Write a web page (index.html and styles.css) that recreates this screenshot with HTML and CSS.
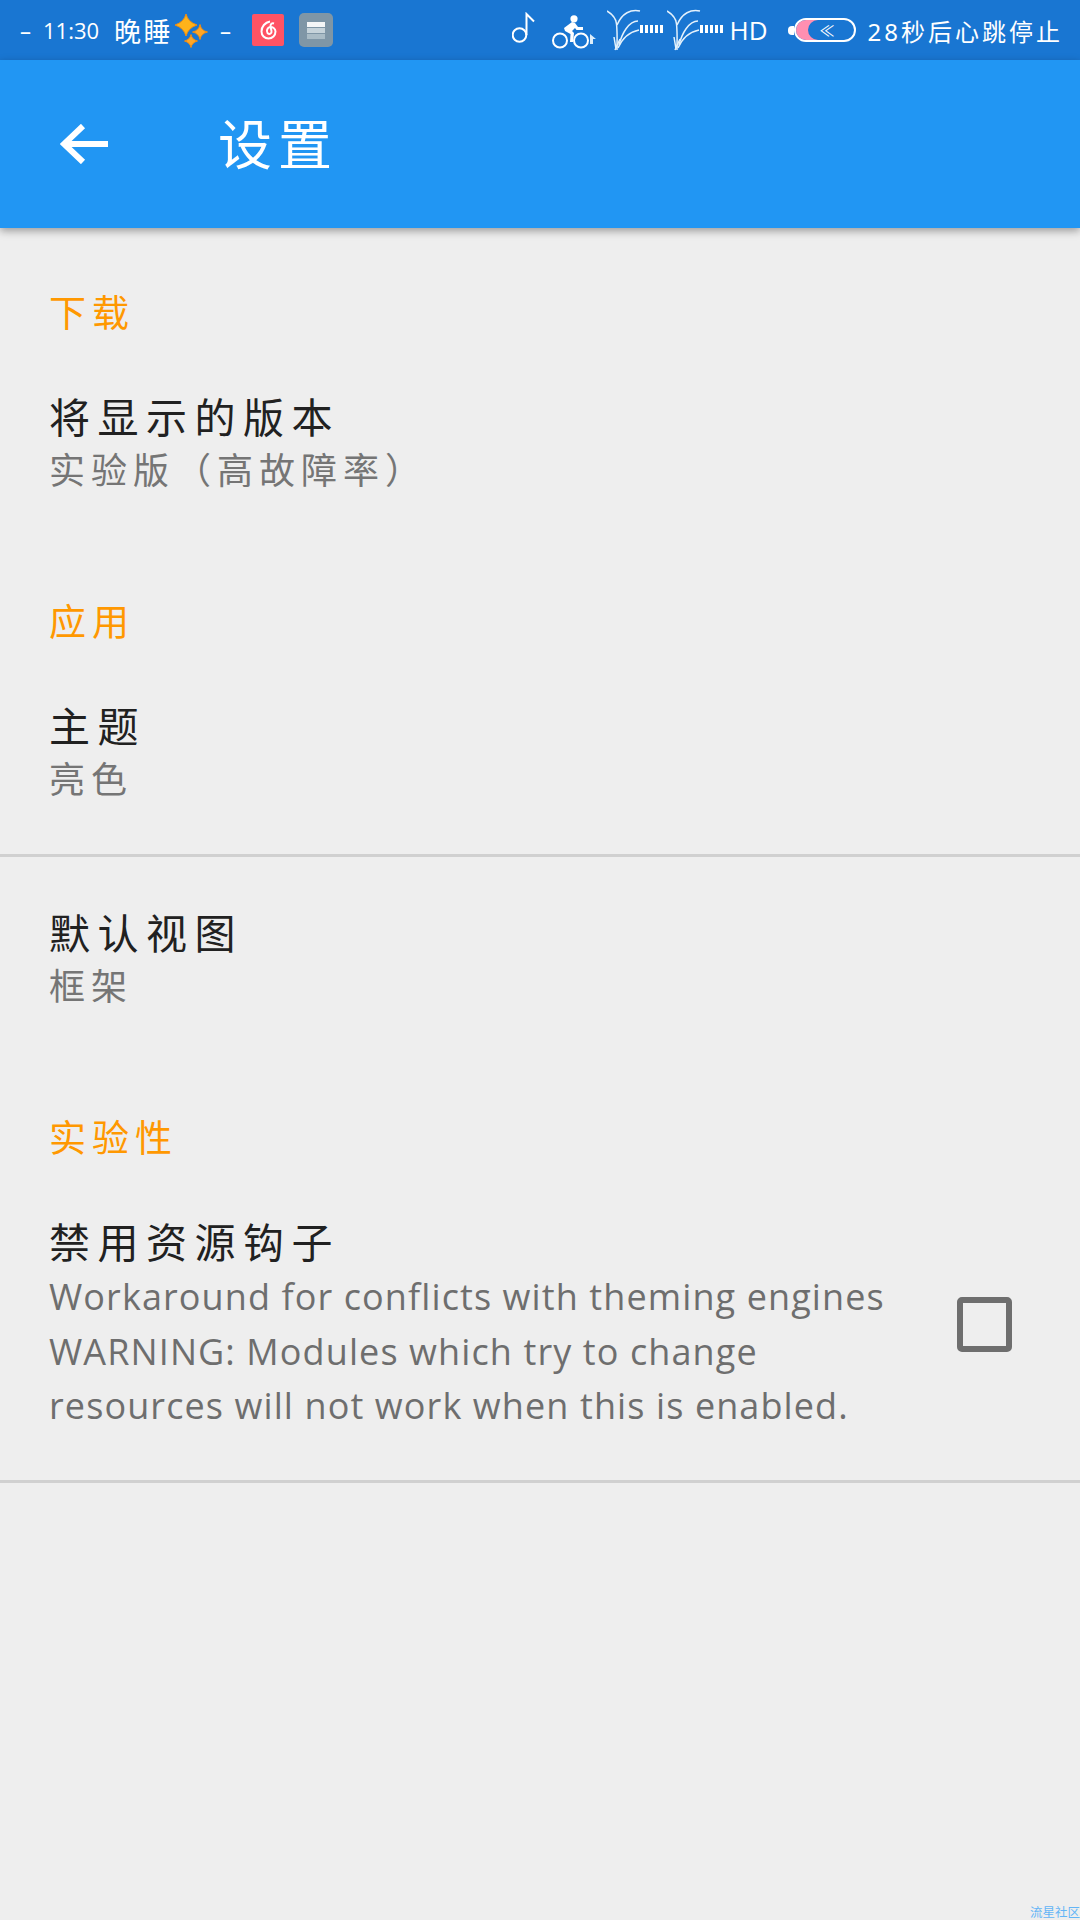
FILE: index.html
```html
<!DOCTYPE html>
<html lang="zh-CN">

<head>
    <meta charset="UTF-8">
    <meta name="viewport" content="width=device-width, initial-scale=1.0">
    <title>设置</title>
    <link rel="stylesheet" href="styles.css">
</head>

<body>
    <div class="status-bar">
        <div class="status-left">
            <span class="status-dash">–</span>
            <span class="status-time">11:30</span>
            <span class="status-note">晚睡</span>
            <svg class="sparkle" width="33" height="35" viewBox="0 0 33 35">
                <path d="M11 1 Q13 9 22 12 Q13 15 11 23 Q9 15 0 12 Q9 9 11 1 Z" fill="#ffb31a" stroke="#f08c10"/>
                <path d="M25 11.5 Q26 17.5 32.5 19 Q26 20.5 25 26.5 Q24 20.5 17.5 19 Q24 17.5 25 11.5 Z" fill="#ffa726" stroke="#f08c10"/>
                <path d="M16 21.5 Q17 26.5 22.5 28 Q17 29.5 16 34.5 Q15 29.5 9.5 28 Q15 26.5 16 21.5 Z" fill="#ffa726" stroke="#f08c10"/>
            </svg>
            <span class="status-dash status-dash-end">–</span>
            <div class="app-icon app-icon-red">
                <svg width="17" height="20" viewBox="0 0 17 20" fill="none" stroke="#fff" stroke-width="2">
                    <path d="M10 1.5 C5 2.5 1.5 6.5 1.5 11.5 A7 7 0 0 0 15.5 11.5 C15.5 8.5 12.5 6.5 10 7 C7.5 7.5 6 11 7.5 13 C9.5 15 12 13.5 11.5 11 L10.5 6.5 C10.3 4 12 2.8 14 3.5"/>
                </svg>
            </div>
            <div class="app-icon app-icon-grey">
                <span class="stack-line stack-top"></span>
                <span class="stack-line"></span>
                <span class="stack-line stack-low"></span>
            </div>
        </div>
        <div class="status-right">
            <svg class="icon-note" width="23" height="32" viewBox="0 0 23 32" fill="none" stroke="#fff" stroke-width="2">
                <circle cx="7.5" cy="23" r="6.8"/>
                <path d="M14.5 23 V2 L22 9.5"/>
            </svg>
            <svg class="icon-bike" width="45" height="34" viewBox="0 0 45 34">
                <circle cx="22" cy="3.8" r="3.6" fill="#fff"/>
                <path d="M12 13 L20 7 L23 8 L26 12 L31 12 L31 15 L24.5 15 L23 13 L20 16 L22 18 L21 27 L18 27 L18.5 19 L13 16 Z" fill="#fff"/>
                <g fill="none" stroke="#fff" stroke-width="2">
                    <circle cx="8" cy="25.5" r="7"/>
                    <circle cx="29" cy="25.5" r="7"/>
                </g>
                <path d="M38 19 L44 24 L41 24 L41 29 L38 29 Z" fill="#dceefb"/>
            </svg>
            <svg class="icon-signal" width="57" height="42" viewBox="0 0 57 42" fill="none" stroke="#e3f1fc" stroke-width="1.5">
                <path d="M0 2 C5 5 9 9 9.5 15 C10.5 24 10 32 10 41"/>
                <path d="M33 2 C24 0 15 4 10 16"/>
                <path d="M31 12 C22 12 15 24 12 36"/>
                <path d="M32 21 C22 23 15 30 11 39"/>
                <path d="M7 28 L9 40 M13 30 L8 41"/>
                <path d="M34.5 16 V24 M39.5 16 V24 M44.5 16 V24 M49.5 16 V24 M54.5 16 V24" stroke="#fff" stroke-width="3"/>
            </svg>
            <svg class="icon-signal icon-signal-2" width="57" height="42" viewBox="0 0 57 42" fill="none" stroke="#e3f1fc" stroke-width="1.5">
                <path d="M0 2 C5 5 9 9 9.5 15 C10.5 24 10 32 10 41"/>
                <path d="M33 2 C24 0 15 4 10 16"/>
                <path d="M31 12 C22 12 15 24 12 36"/>
                <path d="M32 21 C22 23 15 30 11 39"/>
                <path d="M7 28 L9 40 M13 30 L8 41"/>
                <path d="M34.5 16 V24 M39.5 16 V24 M44.5 16 V24 M49.5 16 V24 M54.5 16 V24" stroke="#fff" stroke-width="3"/>
            </svg>
            <span class="status-hd">HD</span>
            <div class="battery">
                <span class="battery-nub"></span>
                <div class="battery-body">
                    <span class="battery-fill"></span>
                    <span class="battery-mark">≪</span>
                </div>
            </div>
            <span class="status-msg">28秒后心跳停止</span>
        </div>
    </div>

    <header class="toolbar">
        <svg class="back-icon" width="48" height="40" viewBox="0 0 48 40" fill="none" stroke="#fff" stroke-width="6">
            <path d="M48 20 H4"/>
            <path d="M23 2 L4 20 L23 38"/>
        </svg>
        <h1 class="toolbar-title">设置</h1>
    </header>

    <main class="prefs">
        <section class="pref-group">
            <h2 class="pref-category">下载</h2>
            <div class="pref">
                <div class="pref-title">将显示的版本</div>
                <div class="pref-summary">实验版（高故障率）</div>
            </div>
        </section>

        <section class="pref-group">
            <h2 class="pref-category">应用</h2>
            <div class="pref pref-divided">
                <div class="pref-title">主题</div>
                <div class="pref-summary">亮色</div>
            </div>
            <div class="pref">
                <div class="pref-title">默认视图</div>
                <div class="pref-summary">框架</div>
            </div>
        </section>

        <section class="pref-group">
            <h2 class="pref-category">实验性</h2>
            <div class="pref pref-check pref-divided">
                <div class="pref-text">
                    <div class="pref-title">禁用资源钩子</div>
                    <div class="pref-summary pref-summary-long">Workaround for conflicts with theming engines<br>WARNING: Modules which try to change<br>resources will not work when this is enabled.</div>
                </div>
                <span class="checkbox"></span>
            </div>
        </section>
    </main>

    <div class="watermark">流星社区</div>
</body>

</html>
```

FILE: styles.css
```css
* {
    box-sizing: border-box;
}

body {
    margin: 0;
    height: 1920px;
    overflow: hidden;
    position: relative;
    background-color: #eeeeee;
    font-family: "Noto Sans", "Noto Sans CJK SC", sans-serif;
}

/* status bar */
.status-bar {
    height: 60px;
    background-color: #1976d2;
    color: #fff;
    display: flex;
    justify-content: space-between;
    align-items: center;
    padding: 0 17px 0 20px;
    font-size: 24px;
}

.status-left,
.status-right {
    display: flex;
    align-items: center;
}

.status-dash {
    width: 13px;
    font-size: 22px;
}

.status-time {
    margin-left: 10px;
    font-size: 22px;
    font-family: "Open Sans", sans-serif;
}

.status-note {
    margin-left: 15px;
    font-size: 27px;
    letter-spacing: 2.5px;
}

.sparkle {
    margin-left: 2px;
}

.status-dash-end {
    margin-left: 12px;
}

.app-icon {
    display: flex;
    align-items: center;
    justify-content: center;
}

.app-icon-red {
    width: 32px;
    height: 32px;
    margin-left: 19px;
    border-radius: 2px;
    background-color: #ff5364;
}

.app-icon-grey {
    width: 34px;
    height: 34px;
    margin-left: 15px;
    border-radius: 5px;
    background-color: #7f96a6;
    flex-direction: column;
    gap: 1px;
}

.stack-line {
    width: 18px;
    height: 5px;
    background-color: #c6d3da;
}

.stack-top {
    background-color: #f4f6f7;
}

.stack-low {
    background-color: #aabcc6;
}

.icon-note {
    margin: -4px 17px 0 0;
}

.icon-bike {
    margin: 3px 10px 0 0;
}

.icon-signal-2 {
    margin-left: 3px;
}

.status-hd {
    margin-left: 5px;
    font-size: 26px;
    font-family: "Open Sans", sans-serif;
}

.battery {
    display: flex;
    align-items: center;
    margin-left: 20px;
}

.battery-nub {
    width: 6px;
    height: 9px;
    border-radius: 4px 0 0 4px;
    background-color: #fff;
}

.battery-body {
    width: 62px;
    height: 24px;
    border: 2px solid #fff;
    border-radius: 12px;
    overflow: hidden;
    display: flex;
    align-items: center;
    position: relative;
}

.battery-fill {
    width: 22px;
    height: 100%;
    background-color: #ff8fb1;
    position: relative;
}

/* bite taken out of the charge level */
.battery-fill::after {
    content: "";
    position: absolute;
    left: 12px;
    top: 0;
    width: 20px;
    height: 20px;
    border-radius: 50%;
    background-color: #1976d2;
}

.battery-mark {
    margin-left: 2px;
    font-size: 15px;
    line-height: 1;
    position: relative;
}

.status-msg {
    margin-left: 12px;
    font-size: 24px;
    letter-spacing: 3px;
}

/* toolbar */
.toolbar {
    height: 168px;
    background-color: #2196f3;
    box-shadow: 0 3px 8px rgba(0, 0, 0, 0.35);
    display: flex;
    align-items: center;
    padding-left: 60px;
    position: relative;
    color: #fff;
}

.toolbar-title {
    margin: 0 0 0 110px;
    font-size: 54px;
    font-weight: 400;
    line-height: 1;
    letter-spacing: 6px;
}

/* preference list */
.prefs {
    padding-top: 63px;
}

.pref-group {
    margin-bottom: 102px;
}

.pref-category {
    margin: 0 0 6px;
    padding-left: 49px;
    font-size: 37px;
    font-weight: 400;
    line-height: 44px;
    color: #ff9800;
    letter-spacing: 6px;
}

.pref {
    padding: 49px 49px 0;
}

.pref-title {
    font-size: 41px;
    line-height: 54px;
    color: #212121;
    letter-spacing: 7.5px;
}

.pref-summary {
    font-size: 36px;
    line-height: 54px;
    color: #757575;
    letter-spacing: 6px;
}

.pref-divided {
    border-bottom: 3px solid #d0d0d0;
    padding-bottom: 47px;
}

.pref-check {
    display: flex;
    align-items: center;
    justify-content: space-between;
    padding-right: 68px;
    padding-bottom: 46px;
}

.pref-summary-long {
    margin-top: 1px;
    font-family: "Open Sans", sans-serif;
    font-size: 36px;
    letter-spacing: 1.1px;
    line-height: 54.5px;
    white-space: nowrap;
    color: #6e6e6e;
}

.checkbox {
    width: 55px;
    height: 55px;
    border: 6px solid #6e6e6e;
    border-radius: 5px;
}

.watermark {
    position: absolute;
    right: 0;
    bottom: 0;
    font-size: 12.5px;
    line-height: 14px;
    color: #64b5f6;
}
```
